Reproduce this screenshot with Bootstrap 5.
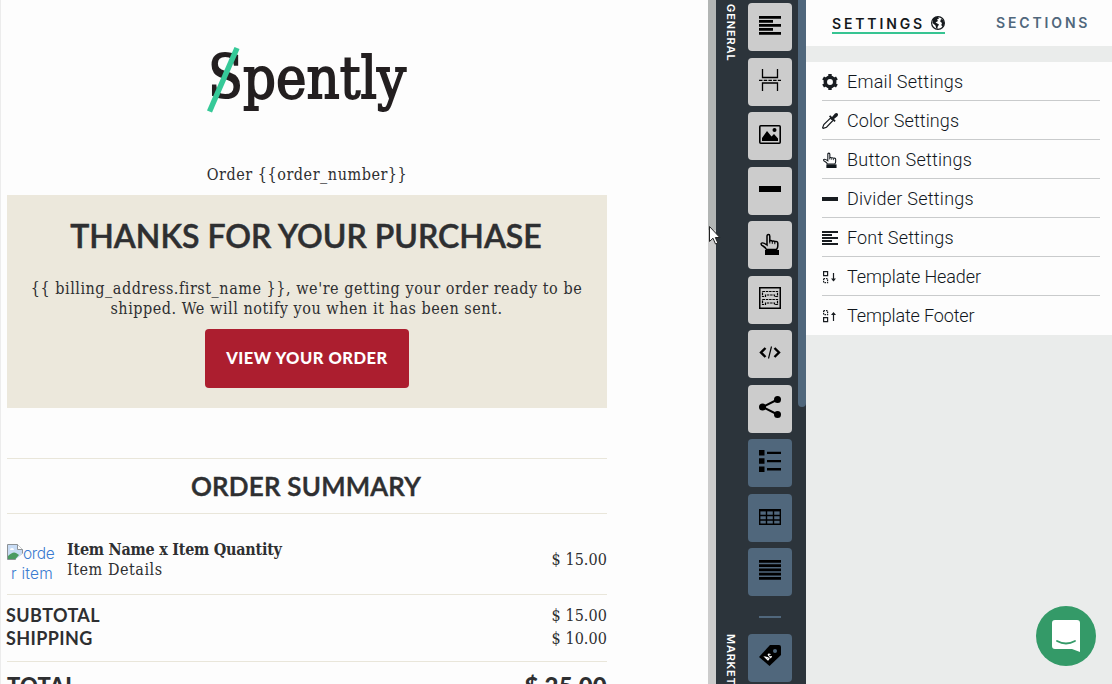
<!DOCTYPE html>
<html lang="en">
<head>
<meta charset="utf-8">
<meta name="viewport" content="width=device-width, initial-scale=1">
<title>Spently template editor</title>
<link href="https://cdn.jsdelivr.net/npm/bootstrap@5.3.0/dist/css/bootstrap.min.css" rel="stylesheet">
<style>
body{background:#fdfdfd;color:#2e2f31}
.preview{width:708px;padding-left:7px;box-shadow:inset 1px 0 #ececec}
.mail{width:600px;font-family:"DejaVu Serif Condensed","DejaVu Serif",serif;font-size:16px;line-height:20px;letter-spacing:.54px}
.logo{height:165px}
.logo svg{margin-top:40px}
.banner{background:#ece8dc;height:213px;margin-top:10px;padding-top:20px}
.title{font-family:Lato,sans-serif;letter-spacing:0;margin:0 2px 0 0}
.banner .title{font-size:32px;font-weight:600;line-height:42px;-webkit-text-stroke:.5px #2e2f31}
.banner p{margin:22px 1px 10px 0}
.order-btn{width:204px;height:59px;background:#ac1e2f!important;color:#fff!important;border:0;border-radius:4px;font:900 16.5px/59px Lato,sans-serif;letter-spacing:.5px;padding:0}
.rule{border-top:1px solid #e9e6da}
.summary{margin-top:50px;height:55px}
.summary .title{font-size:26px;line-height:55px;font-weight:600;letter-spacing:.2px;-webkit-text-stroke:.5px #2e2f31}
.item-row{height:81px}
.thumb{width:50px;color:#3a7bd0;font:300 15.5px/20px Inter,sans-serif;letter-spacing:.2px;margin-right:10px;white-space:nowrap}
.name{font-weight:700;letter-spacing:-.25px}
.price{letter-spacing:.08px}
.sums{height:67px;padding-top:9px;line-height:23px}
.sums .lbl{font:700 18px/23px Lato,sans-serif;letter-spacing:.4px;margin-left:-1px}
.total{font:900 22px/30px Lato,sans-serif;height:22px;padding-top:9px;letter-spacing:.2px}
.total .amt{font-size:24px}
.track{width:8px;background:linear-gradient(#b2b5b4 0 230px,#ccc 230px)}
.tools{width:82px;background:#2c343b;padding-top:3px;color:#000}
.cap{writing-mode:vertical-rl;width:24px;color:#fff;font:600 11px/22px Inter,sans-serif;letter-spacing:.9px;padding-top:1px;margin-left:2px;margin-right:6px}
.cap.low{padding-top:0;letter-spacing:.75px}
.tile{width:44px;height:48px;border-radius:4px;background:#ccc;display:flex;align-items:center;justify-content:center}
.tile.alt{background:#50677c}
.tile svg{margin-top:-3px}
.tilecol{gap:6.5px}
.sep{width:22px;height:2px;background:#50677c}
.scroll{width:8px;background:#2c343b}
.scroll div{height:407px;background:#50677c;border-radius:0 0 4px 4px}
.panel{background:#eaeceb;font-family:Roboto,sans-serif}
.tabs{height:46px;background:#fdfdfd;padding-left:26px}
.tab{font:600 14px/17px Inter,sans-serif;letter-spacing:2.85px;margin-top:14px;height:20px;text-decoration:none}
.tab.on{width:113px;color:#15191d;border-bottom:2px solid #36c492;margin-right:51px}
.tab.off{color:#50677c}
.menu{margin-top:16px;height:273px;background:#fdfdfd;padding:0 12px 0 16px;list-style:none;margin-bottom:0}
.menu li{height:39px;border-bottom:1px solid #c9cbcc;font-weight:300;font-size:18px;line-height:39px;color:#10161c;gap:9px;letter-spacing:.25px}
.menu li:last-child{border:0}
.menu svg{flex:none;margin-top:1px}
.chat{position:fixed;left:1036px;top:606px;width:60px;height:60px;border-radius:50%;background:#349a68}
.pointer{position:fixed;left:708px;top:225px}
</style>
</head>
<body>
<svg class="d-none">
<symbol id="hand" viewBox="0 0 22 22"><path d="M8 12V3.2q0-1.700 1.400-1.700t1.400 1.700V8q1.300-1 2.500.2q1.500-.7 2.500.4q2.700-.6 3 1.400V13q0 2-1.300 3.500H7.500Q6.500 14.500 4 13q-2.300-1-1.800-2.600Q3.500 8.800 8 12z" fill="none" stroke="currentColor" stroke-width="1.500"/><path d="M10.800 8v2.500M13.300 8.500v2.300M15.800 9v2.200" stroke="currentColor" fill="none"/><path d="M6 17h14v5H6z" fill="currentColor"/></symbol>
<symbol id="lines" viewBox="0 0 22 19"><path d="M0 0h22v2.800H0zM0 4h14v2.800H0zM0 8h22v2.800H0zM0 12h14v2.800H0zM0 16h22v2.800H0z" fill="currentColor"/></symbol>
</svg>
<div class="d-flex vh-100 overflow-hidden">
  <main class="preview flex-shrink-0">
    <div class="mail">
      <div class="logo text-center">
        <svg width="210" height="80" viewBox="0 0 210 80" style="letter-spacing:0">
          <g fill="#231f20" stroke="#231f20" stroke-width="1.800" font-family="DejaVu Serif"><text x="6" y="58" font-size="60" textLength="35" lengthAdjust="spacingAndGlyphs">S</text><text x="41" y="58" font-size="58" textLength="163" lengthAdjust="spacingAndGlyphs">pently</text></g>
          <path d="M7.500 71.500 35 8" stroke="#36c998" stroke-width="5.500"/>
        </svg>
      </div>
      <div class="text-center">Order {{order_number}}</div>
      <section class="banner text-center">
        <h1 class="title">THANKS FOR YOUR PURCHASE</h1>
        <p>{{ billing_address.first_name }}, we're getting your order ready to be<br>shipped. We will notify you when it has been sent.</p>
        <a class="btn order-btn">VIEW YOUR ORDER</a>
      </section>
      <section class="summary rule text-center"><h2 class="title">ORDER SUMMARY</h2></section>
      <section class="item-row rule d-flex align-items-start">
        <div class="thumb" style="margin-top:30px"><div class="d-flex"><svg width="16" height="16" viewBox="0 0 16 16"><path d="M.5.500h10l5 5v4l-6 6h-9z" fill="#c8dcf5" stroke="#8d9296"/><path d="M10.500.500v5h5" fill="#fff" stroke="#8d9296"/><path d="M3 6q0-2 2-2t2 2z" fill="#fff"/><path d="M1 15v-3q5-5 8-3l3 2-3.500 4z" fill="#4a9a62"/><path d="m9 16 7-6" stroke="#fff" stroke-width="1.500"/></svg><span style="letter-spacing:-.4px">orde</span></div><div class="text-center">r item</div></div>
        <div class="flex-grow-1" style="margin-top:26px"><div class="name">Item Name x Item Quantity</div><div>Item Details</div></div>
        <div class="price" style="margin-top:36px">$ 15.00</div>
      </section>
      <section class="sums rule">
        <div class="d-flex justify-content-between"><span class="lbl">SUBTOTAL</span><span class="price">$ 15.00</span></div>
        <div class="d-flex justify-content-between"><span class="lbl">SHIPPING</span><span class="price">$ 10.00</span></div>
      </section>
      <section class="total rule d-flex justify-content-between"><span>TOTAL</span><span class="amt">$ 25.00</span></section>
    </div>
  </main>
  <div class="track flex-shrink-0"></div>
  <aside class="tools flex-shrink-0 d-flex flex-column">
    <div class="d-flex">
      <div class="cap">GENERAL</div>
      <div class="tilecol d-flex flex-column">
        <div class="tile"><svg width="22" height="19"><use href="#lines"/></svg></div>
        <div class="tile"><svg width="22" height="22" viewBox="0 0 22 22" fill="none" stroke="#000" stroke-width="1.300"><path d="M3.500 0v8.500h15V0M3.500 22v-8h15v8"/><path d="M0 11.300h22" stroke-dasharray="3.500 1.200"/></svg></div>
        <div class="tile"><svg width="22" height="19" viewBox="0 0 22 19"><rect x=".8" y=".8" width="20.400" height="17.400" rx="1" fill="none" stroke="#000" stroke-width="1.600"/><path d="M3 16v-3l5-7 4.500 5.500L15 9l4 4.500V16z"/><circle cx="15.500" cy="5" r="2"/></svg></div>
        <div class="tile"><svg width="22" height="6"><path d="M0 0h22v6H0z"/></svg></div>
        <div class="tile"><svg width="22" height="22"><use href="#hand"/></svg></div>
        <div class="tile"><svg width="22" height="22" viewBox="0 0 22 22" fill="none" stroke="#000" stroke-width="1.500"><path d="M.75.750h20.500v20.500H.75z"/><path d="M3.500 4.500h15v5h-3V8h-9v1.500h-3zM3.500 12.500h15v5h-3V16h-9v1.500h-3z" stroke-dasharray="2.500 .8" stroke-width="1.200"/></svg></div>
        <div class="tile"><svg width="22" height="13" viewBox="0 0 22 13" fill="none" stroke="#000"><path d="M6.500 2 2 6.500 6.500 11M15.500 2 20 6.500 15.500 11" stroke-width="2.400"/><path d="M12.500.500l-3 12" stroke-width="1.200"/></svg></div>
        <div class="tile"><svg width="22" height="22" viewBox="0 0 22 22"><path d="M18.500 3.500 3.500 11l15 7.500" fill="none" stroke="#000" stroke-width="2"/><circle cx="18.500" cy="3.500" r="3.500"/><circle cx="3.500" cy="11" r="3.500"/><circle cx="18.500" cy="18.500" r="3.500"/></svg></div>
        <div class="tile alt"><svg width="22" height="22" viewBox="0 0 22 22" style="margin-top:-5px"><path d="M0 0h5.500v5.500H0zM0 8.200h5.500v5.500H0zM0 16.400h5.500v5.500H0zM8 1.700h14v2.400H8zM8 9.900h14v2.400H8zM8 18.100h14v2.400H8z"/></svg></div>
        <div class="tile alt"><svg width="22" height="16" viewBox="0 0 22 16" fill="none" stroke="#000" style="margin-top:-2px"><path d="M0 1.200h22" stroke-width="2.400"/><path d="M.7 0v15.300h20.600V0M7.500 0v15M14.500 0v15M0 6.500h22M0 11h22" stroke-width="1.400"/></svg></div>
        <div class="tile alt"><svg width="22" height="20" viewBox="0 0 22 20" style="margin-top:-5px"><path d="M0 0h22v2.800H0zM0 4.300h22v2.800H0zM0 8.500h22v2.800H0zM0 12.700h22v2.800H0zM0 16.900h22v2.800H0z"/></svg></div>
      </div>
    </div>
    <div class="sep" style="margin:20px 0 16px 43px"></div>
    <div class="d-flex" style="height:48px">
      <div class="cap low">MARKET</div>
      <div class="tile alt"><svg width="22" height="21" viewBox="0 0 22 21" style="margin-top:-5px"><path d="M11 0h9q2 0 2 2v8L10.500 21 0 12z"/><circle cx="16" cy="6" r="2" fill="#50677c"/><path d="m6 12 3 3q2.500-2-3-3zM11.500 9.500q-3-1-2 .8t2.500 1.400-1.500 1.500" fill="none" stroke="#fff" stroke-width="1.100"/></svg></div>
    </div>
  </aside>
  <div class="scroll flex-shrink-0"><div></div></div>
  <aside class="panel flex-grow-1">
    <nav class="tabs d-flex">
      <a class="tab on d-flex justify-content-between align-items-center">SETTINGS<svg width="14" height="14" viewBox="0 0 14 14"><circle cx="7" cy="7" r="6.400" fill="#fff" stroke="#15191d" stroke-width="1.200"/><path d="M2 3Q4 .8 7 .800l1 1.700-2 1 1 1.500-2.500 1.500L8 8.500 6.500 11v2Q4.500 12 4.500 9.500L1.500 7zM10 3l2.500 1 .8 4-1.800 3-1.200-2 .7-2-1.800-1.500z" fill="#15191d"/></svg></a>
      <a class="tab off">SECTIONS</a>
    </nav>
    <ul class="menu">
      <li class="d-flex align-items-center"><svg width="16" height="16" viewBox="0 0 16 16"><circle cx="8" cy="8" r="4.700" fill="none" stroke="#181c20" stroke-width="3.500"/><path d="M6.300 0h3.400v3H6.300zM6.300 13h3.400v3H6.300zM.2 5.500 2 2.500l2.600 1.600-1.700 3zM11.400 11.900l2.600 1.600 1.800-3-2.700-1.600zM2 13.500l-1.800-3 2.700-1.600 1.700 3zM14 2.500l1.800 3-2.700 1.600-1.700-3z" fill="#181c20"/></svg>Email Settings</li>
      <li class="d-flex align-items-center" style="letter-spacing:.08px"><svg width="16" height="16" viewBox="0 0 16 16"><path d="m8.500 5 2.500 2.500-6.500 6.700-3.300 1.200-.6-.6 1.200-3.300z" fill="none" stroke="#181c20" stroke-width="1.200"/><path d="m7 3.500 1.200-1.200L10 4l3-3.400q1.500-1.200 2.600 0 .9 1.200-.2 2.600L12 6l1.700 1.800L12.500 9z" fill="#181c20"/></svg>Color Settings</li>
      <li class="d-flex align-items-center"><svg width="16" height="16"><use href="#hand"/></svg>Button Settings</li>
      <li class="d-flex align-items-center"><svg width="16" height="4"><path d="M0 0h16v4H0z" fill="#181c20"/></svg>Divider Settings</li>
      <li class="d-flex align-items-center" style="letter-spacing:.15px"><svg width="16" height="14" viewBox="0 0 16 14"><path d="M0 0h16v2H0zM0 3h10v2H0zM0 6h16v2H0zM0 9h10v2H0zM0 12h16v2H0z" fill="#181c20"/></svg>Font Settings</li>
      <li class="d-flex align-items-center" style="letter-spacing:-.1px"><svg width="16" height="14" viewBox="0 0 16 14" fill="none" stroke="#181c20" stroke-width="1.200"><path d="M1.600 1.600h4v4h-4z"/><path d="M1.600 8.600h4v4h-4z" stroke-dasharray="1.500 .9"/><path d="M11.500 3v8"/><path d="M9 8.500h5l-2.500 3z" fill="#181c20" stroke="none"/></svg>Template Header</li>
      <li class="d-flex align-items-center" style="letter-spacing:-.15px"><svg width="16" height="14" viewBox="0 0 16 14" fill="none" stroke="#181c20" stroke-width="1.200"><path d="M1.600 8.600h4v4h-4z"/><path d="M1.600 1.600h4v4h-4z" stroke-dasharray="1.500 .9"/><path d="M11.500 12V4"/><path d="M9 6h5l-2.500-3z" fill="#181c20" stroke="none"/></svg>Template Footer</li>
    </ul>
  </aside>
</div>
<div class="chat"><svg width="60" height="60" viewBox="0 0 60 60"><path d="M19 14h22q3 0 3 3v29l-8-3H19q-3 0-3-3V17q0-3 3-3z" fill="#fff"/><path d="M21 35q9 5 18 0" fill="none" stroke="#349a68" stroke-width="1.800" stroke-linecap="round"/></svg></div>
<svg class="pointer" width="13" height="21" viewBox="0 0 13 21"><path d="M1.500 1.500v15l3.500-3.300 2.500 5.800 2.300-1-2.500-5.500h4.500z" fill="#fff" stroke="#222"/></svg>
</body>
</html>
